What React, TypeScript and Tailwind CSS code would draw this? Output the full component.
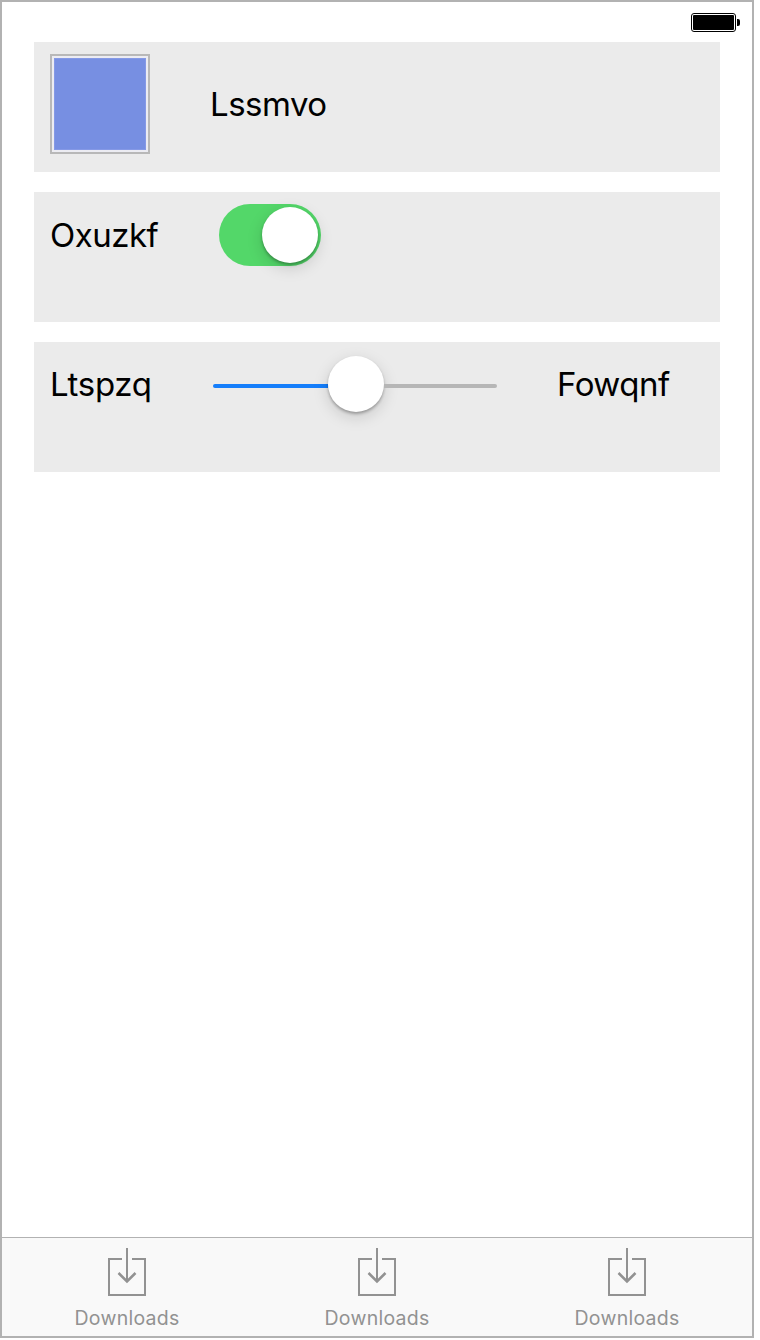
import type { ReactNode } from "react";

function Battery() {
  return (
    <svg width="50" height="20" viewBox="0 0 50 20" aria-hidden="true">
      <rect x="0.5" y="0.5" width="44" height="18" rx="2.5" fill="none" stroke="#000" />
      <rect x="2" y="2" width="41" height="15" rx="1" fill="#000" />
      <path d="M46 6h1a2 2 0 0 1 2 2v3a2 2 0 0 1-2 2h-1z" fill="#000" />
    </svg>
  );
}

function Card({ children }: { children: ReactNode }) {
  return <section className="flex h-[130px] items-start bg-[#ebebeb] pl-4 pt-3">{children}</section>;
}

function DownloadTab() {
  return (
    <button className="flex flex-1 flex-col items-center pt-[10px] text-[#929292]">
      <svg width="38" height="48" viewBox="0 0 38 48" fill="none" stroke="currentColor" strokeWidth="2">
        <path d="M14 11H1v36h36V11H24M19 0v33" />
        <path d="M10.5 25l8.5 8.5 8.5-8.5" strokeWidth="2.5" />
      </svg>
      <span className="mt-[10px] text-[19.5px] leading-6 tracking-[0.25px]">Downloads</span>
    </button>
  );
}

export default function App() {
  return (
    <div className="h-[1340px] w-[760px] bg-white font-['Inter',sans-serif] text-black">
      <div className="flex h-[1338px] w-[754px] flex-col border-2 border-[#b2b2b2] bg-white">
        <header className="flex h-10 shrink-0 justify-end pr-[11px] pt-[11px]">
          <Battery />
        </header>
        <main className="flex flex-1 flex-col gap-5 pl-8 pr-8 text-[33px] leading-[40px]">
          <Card>
            <div className="size-[100px] border-2 border-[#b8b8b8] bg-[#ececf2] p-[2px]">
              <div className="size-full border border-[#8599e6] bg-[#778fe2]" />
            </div>
            <span className="ml-[60px] mt-[30px] tracking-[-0.5px]">Lssmvo</span>
          </Card>
          <Card>
            <span className="mt-[11px] w-[169px] tracking-[-0.5px]">Oxuzkf</span>
            <div role="switch" aria-checked="true" className="flex h-[62px] w-[102px] items-center justify-end rounded-full bg-[#53d769] pr-[3px]">
              <div className="size-14 rounded-full bg-white shadow-[0_5px_16px_rgba(0,0,0,0.15),0_2px_3px_rgba(0,0,0,0.28)]" />
            </div>
          </Card>
          <Card>
            <span className="mt-[10px] w-[163px] tracking-[-0.3px]">Ltspzq</span>
            <div className="mt-[2px] flex h-14 w-[284px] items-center">
              <div className="mt-1 h-1 w-[115px] rounded-l-full bg-[#157efb]" />
              <div className="size-14 shrink-0 rounded-full bg-white shadow-[0_5px_16px_rgba(0,0,0,0.15),0_2px_3px_rgba(0,0,0,0.28)]" />
              <div className="mt-1 h-1 flex-1 rounded-r-full bg-[#b6b6b6]" />
            </div>
            <span className="ml-[60px] mt-[10px] tracking-[-0.5px]">Fowqnf</span>
          </Card>
        </main>
        <nav className="flex h-[99px] shrink-0 items-start border-t border-[#b2b2b2] bg-[#f9f9f9]">
          <DownloadTab />
          <DownloadTab />
          <DownloadTab />
        </nav>
      </div>
    </div>
  );
}
